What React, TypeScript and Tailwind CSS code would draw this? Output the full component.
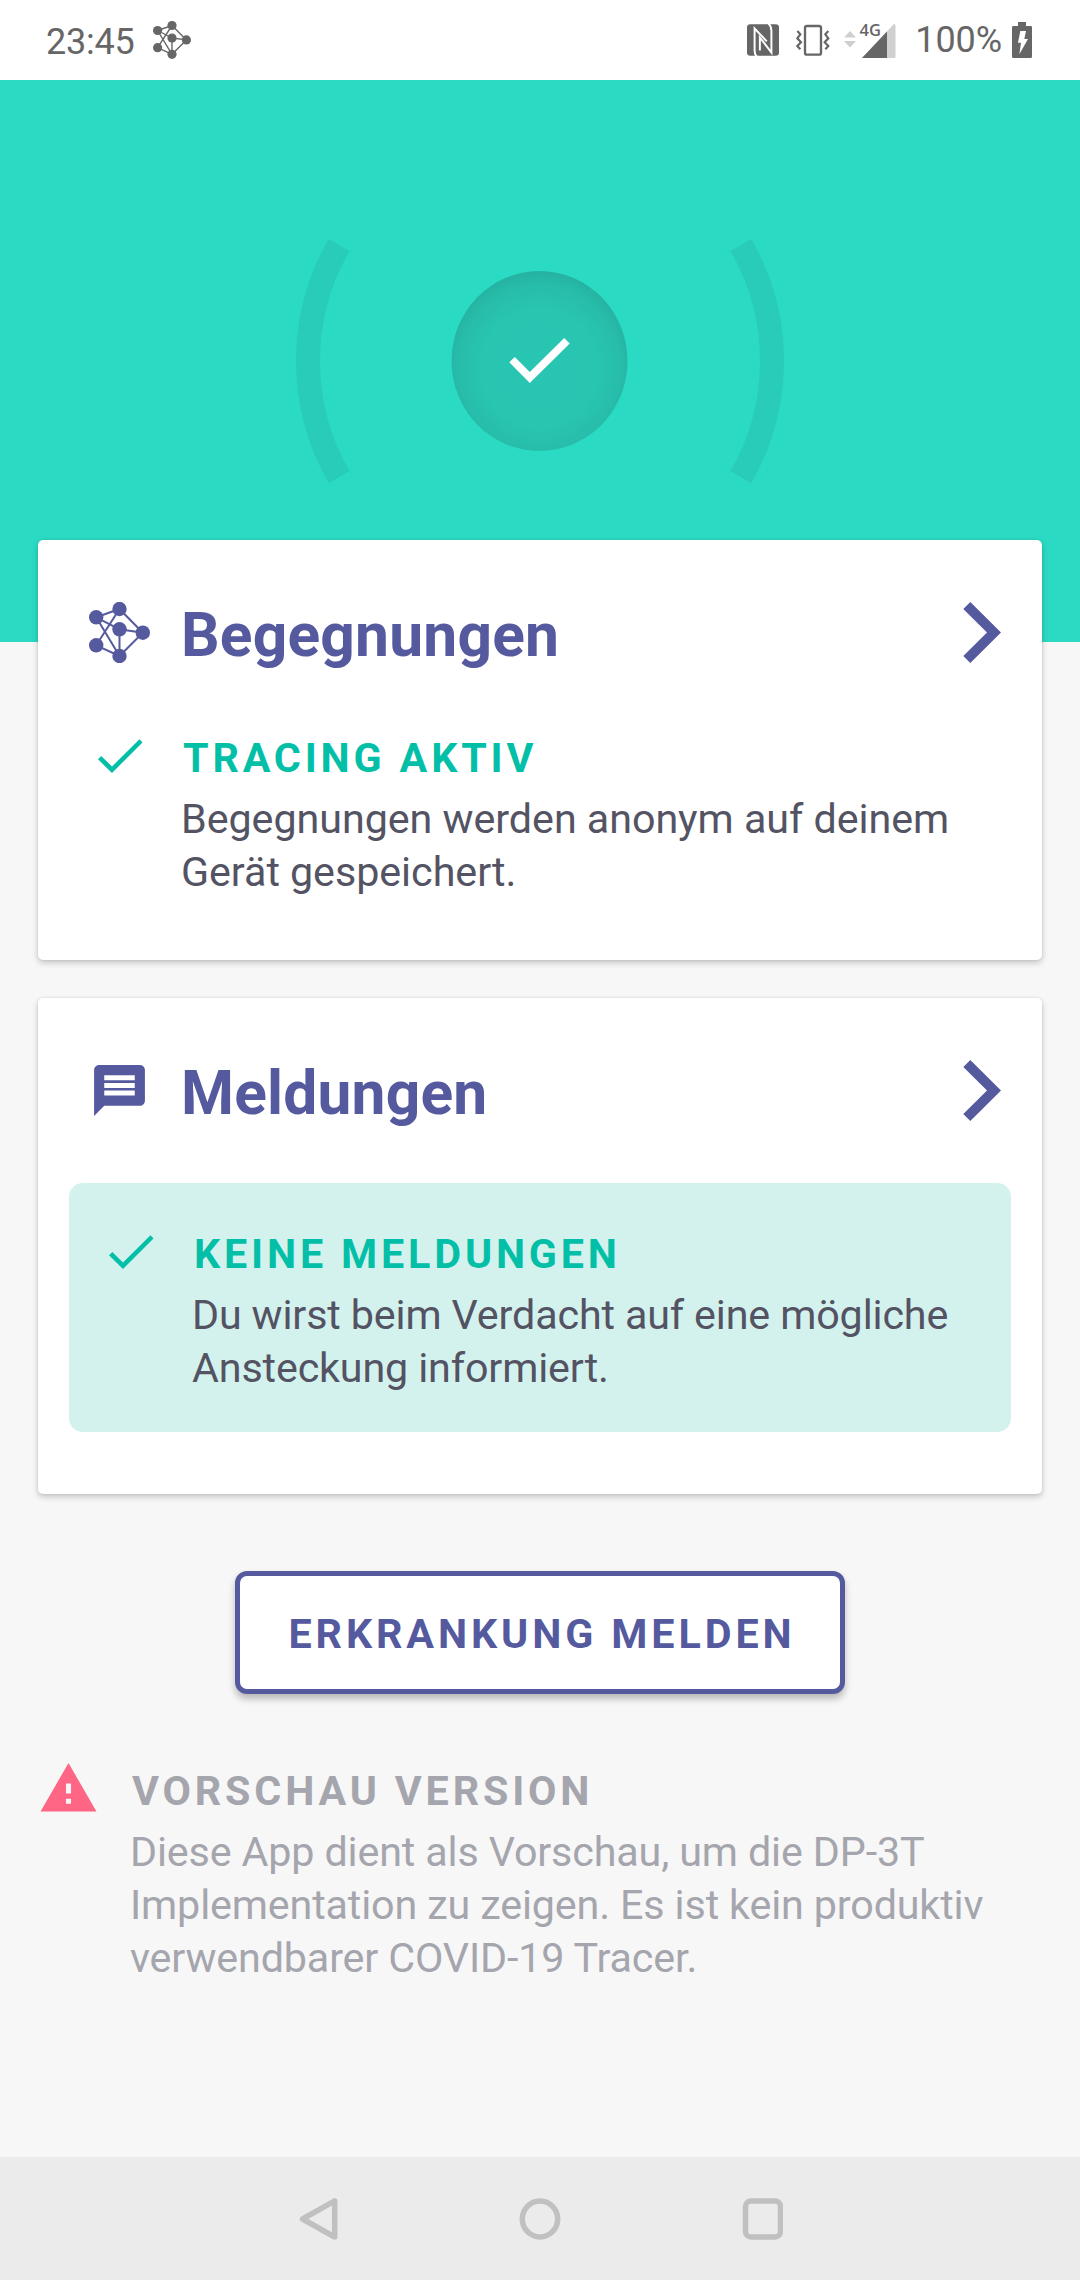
import type { ReactNode } from "react";

function NetworkIcon() {
  return (
    <svg viewBox="0 0 61 61" className="size-[61px]" fill="currentColor" stroke="currentColor">
      <path
        d="M7.2 15.3 30.5 7M7.2 15.3 30.5 27.3M7.2 15.3 30.5 54M7.2 43.3 30.5 7M7.2 43.3 30.5 54M30.5 7 53.8 30.7M30.5 27.3 53.8 30.7M30.5 54 53.8 30.7M30.5 27.3V54"
        fill="none"
        strokeWidth="2"
      />
      <g stroke="none">
        <circle cx="7.2" cy="15.3" r="7.2" />
        <circle cx="30.5" cy="7" r="7.2" />
        <circle cx="30.5" cy="27.3" r="7.2" />
        <circle cx="53.8" cy="30.7" r="7.2" />
        <circle cx="7.2" cy="43.3" r="7.2" />
        <circle cx="30.5" cy="54" r="7.2" />
      </g>
    </svg>
  );
}

function MessageIcon() {
  return (
    <svg viewBox="0 0 24 24" className="size-[61px]" fill="currentColor">
      <path d="M20 2H4c-1.1 0-1.99.9-1.99 2L2 22l4-4h14c1.1 0 2-.9 2-2V4c0-1.1-.9-2-2-2zm-2 12H6v-2h12v2zm0-3H6V9h12v2zm0-3H6V6h12v2z" />
    </svg>
  );
}

function StatusBar() {
  return (
    <header className="flex h-20 items-center justify-between bg-white pr-12 pl-[46px] text-[36px] leading-[42px] text-[#666666]">
      <div className="flex items-center">
        <span className="pt-[3px] tracking-[-0.25px]">23:45</span>
        <svg viewBox="154 21 38 38" className="ml-[19px] h-[38px] w-[38px]" fill="currentColor" stroke="currentColor">
          <path
            d="M158.6 30.5 173 25.5M158.6 30.5 173 38M158.6 30.5 173 54.3M158.6 47.7 173 25.5M158.6 47.7 173 54.3M173 25.5 187.4 39.9M173 38 187.4 39.9M173 54.3 187.4 39.9M173 38V54.3"
            fill="none"
            strokeWidth="1.4"
          />
          <g stroke="none">
            <circle cx="158.6" cy="30.5" r="4.6" />
            <circle cx="173" cy="25.5" r="4.6" />
            <circle cx="173" cy="38" r="4.6" />
            <circle cx="187.4" cy="39.9" r="4.6" />
            <circle cx="158.6" cy="47.7" r="4.6" />
            <circle cx="173" cy="54.3" r="4.6" />
          </g>
        </svg>
      </div>
      <div className="flex items-center">
        <svg viewBox="79 72 97 96" className="h-8 w-8">
          <rect x="79" y="72" width="97" height="96" rx="10" fill="#666666" />
          <g fill="none" stroke="#ffffff" strokeWidth="6">
            <path d="M109 170Q102 164 102 152V85L139 124" />
            <path d="M118 152V112L153 158V92Q153 78 144 70" />
          </g>
        </svg>
        <svg viewBox="228 72 102 96" className="ml-[17px] h-8 w-[34px]" fill="none" stroke="#666666">
          <rect x="255" y="78" width="48" height="86" rx="6" strokeWidth="7" />
          <path d="M232 93 241 103 232 115 243 127 232 138 241 148M325 93 316 103 325 115 314 127 325 138 316 148" strokeWidth="6.500" />
        </svg>
        <svg viewBox="843 12 53 56" className="ml-[13px] h-[56px] w-[53px]">
          <path d="M862 58 894 24Q895.500 24 895.500 26V56.500Q895.500 58 894 58Z" fill="#d0d0d0" />
          <path d="M862 58 887 31.500V58Z" fill="#666666" />
          <path d="M855 20H882V36.500H855Z" fill="#ffffff" />
          <path d="M844 37.500 850 31 856 37.500ZM844 41 850 47.500 856 41Z" fill="#cfcfcf" />
          <text x="859.500" y="36" fill="#666666" fontSize="16.500" fontWeight="600" fontFamily="Open Sans, sans-serif">
            4G
          </text>
        </svg>
        <span className="ml-[19px] pb-px tracking-[-0.1px]">100%</span>
        <svg viewBox="876 66 60 108" className="ml-[10px] h-9 w-5">
          <path d="M894 66h24v12h14q4 0 4 4v88q0 4-4 4h-52q-4 0-4-4V82q0-4 4-4h14z" fill="#666666" />
          <path d="M901 93h17l-5 24h11l-26 46 5-35h-9z" fill="#ffffff" />
        </svg>
      </div>
    </header>
  );
}

function Hero() {
  return (
    <div className="flex h-[562px] justify-center bg-[#2bdac3] pt-[145px]">
      <svg viewBox="290 225 500 272" className="h-[272px] w-[500px]">
        <defs>
          <radialGradient id="disc" cx="0.5" cy="0.54" r="0.54">
            <stop offset="0" stopColor="#28c6b2" />
            <stop offset="0.62" stopColor="#28c5b1" />
            <stop offset="0.85" stopColor="#27bdaa" />
            <stop offset="1" stopColor="#25b2a1" />
          </radialGradient>
        </defs>
        <g fill="none" stroke="#29ccb8" strokeWidth="24">
          <path d="M339.100 245A232 232 0 0 0 339.100 477" />
          <path d="M740.900 245A232 232 0 0 1 740.900 477" />
        </g>
        <ellipse cx="539.500" cy="361" rx="88" ry="90" fill="url(#disc)" />
        <path d="M509.300 362.300 514.800 357 529.800 372 564.200 338 569.700 343.400 529.800 383Z" fill="#ffffff" />
      </svg>
    </div>
  );
}

function Card({ icon, title, children }: { icon: ReactNode; title: string; children: ReactNode }) {
  return (
    <section className="rounded-[5px] bg-white pt-[60px] pb-[61px] shadow-[0_3px_6px_rgba(0,0,0,0.2),0_0_3px_rgba(0,0,0,0.1)]">
      <div className="flex h-[65px] items-center pr-[41px] pl-[51px] text-[#555a9f]">
        {icon}
        <h2 className="ml-[31px] flex-1 pt-[6px] text-[60.5px] leading-[72px] font-bold tracking-[0.2px]">{title}</h2>
        <svg viewBox="0 0 38 61" className="h-[61px] w-[38px]" fill="currentColor">
          <path d="M0.300 7 7.300 0 38 30.500 7.300 61 0.300 54 24 30.500Z" />
        </svg>
      </div>
      {children}
    </section>
  );
}

function Status({ heading, children }: { heading: string; children: ReactNode }) {
  return (
    <div className="flex">
      <svg viewBox="0 1 61 53" className="h-[53px] w-[61px] shrink-0">
        <path d="M9 28.300 12.300 25 23 35.500 50.500 8.300 53.500 11.400 23 42Z" fill="#04bfa7" />
      </svg>
      <div className="ml-[31px]">
        <h3 className="pl-[2px] text-[41.25px] leading-[53px] font-bold tracking-[3.84px] text-[#04bfa7]">{heading}</h3>
        <div className="mt-2 text-[41.25px] leading-[53px] text-[#535363]">{children}</div>
      </div>
    </div>
  );
}

function NavBar() {
  return (
    <nav className="flex h-[123px] items-start justify-between bg-[#ebebeb] px-[297px] pt-[39px]">
      <svg viewBox="0 0 44 46" className="h-[46px] w-[44px]" fill="none" stroke="#c0c0c0" strokeWidth="5.500" strokeLinejoin="round">
        <path d="M5.500 23 37.700 4.900V41Z" />
      </svg>
      <svg viewBox="0 0 44 46" className="h-[46px] w-[44px]" fill="none" stroke="#c0c0c0" strokeWidth="5.500">
        <ellipse cx="22" cy="23" rx="17.700" ry="17.900" />
      </svg>
      <svg viewBox="0 0 44 46" className="h-[46px] w-[44px]" fill="none" stroke="#c0c0c0" strokeWidth="5.500">
        <rect x="6.500" y="5.100" width="35" height="35.800" rx="5.500" />
      </svg>
    </nav>
  );
}

export default function App() {
  return (
    <div className="flex h-[2280px] w-[1080px] flex-col overflow-hidden bg-[#f7f7f7] font-[Roboto,sans-serif]">
      <StatusBar />
      <Hero />
      <main className="-mt-[102px] flex flex-1 flex-col px-[38px]">
        <Card icon={<NetworkIcon />} title="Begegnungen">
          <div className="mt-[67px] pl-[51px]">
            <Status heading="TRACING AKTIV">
              <p className="tracking-[-0.05px]">Begegnungen werden anonym auf deinem Gerät gespeichert.</p>
            </Status>
          </div>
        </Card>
        <div className="mt-[38px]">
          <Card icon={<MessageIcon />} title="Meldungen">
            <div className="mx-[31px] mt-[60px] mb-px rounded-[14px] bg-[#d4f2ed] pt-[45px] pr-[30px] pb-[37px] pl-[31px]">
              <Status heading="KEINE MELDUNGEN">
                <p className="tracking-[-0.14px]">Du wirst beim Verdacht auf eine mögliche Ansteckung informiert.</p>
              </Status>
            </div>
          </Card>
        </div>
        <button className="mt-[77px] h-[123px] w-[610px] self-center rounded-[12px] border-[5px] border-[#555a9f] bg-white pt-[3px] pl-[4px] text-[41.25px] leading-[53px] font-bold tracking-[3.9px] text-[#555a9f] shadow-[0_5px_7px_rgba(0,0,0,0.25)]">
          ERKRANKUNG MELDEN
        </button>
        <div className="mt-[71px] flex text-[#a5a5ad]">
          <svg viewBox="0 0 24 24" className="-mt-[7px] size-[61px] shrink-0" fill="#ff6584">
            <path d="M1 21h22L12 2 1 21zm12-3h-2v-2h2v2zm0-4h-2v-4h2v4z" />
          </svg>
          <div className="ml-[31px]">
            <h3 className="pl-[2px] text-[41.25px] leading-[53px] font-bold tracking-[3.84px]">VORSCHAU VERSION</h3>
            <p className="mt-2 text-[41.25px] leading-[53px] tracking-[-0.14px]">
              Diese App dient als Vorschau, um die DP-3T Implementation zu zeigen. Es ist kein produktiv verwendbarer COVID-19
              Tracer.
            </p>
          </div>
        </div>
      </main>
      <NavBar />
    </div>
  );
}
